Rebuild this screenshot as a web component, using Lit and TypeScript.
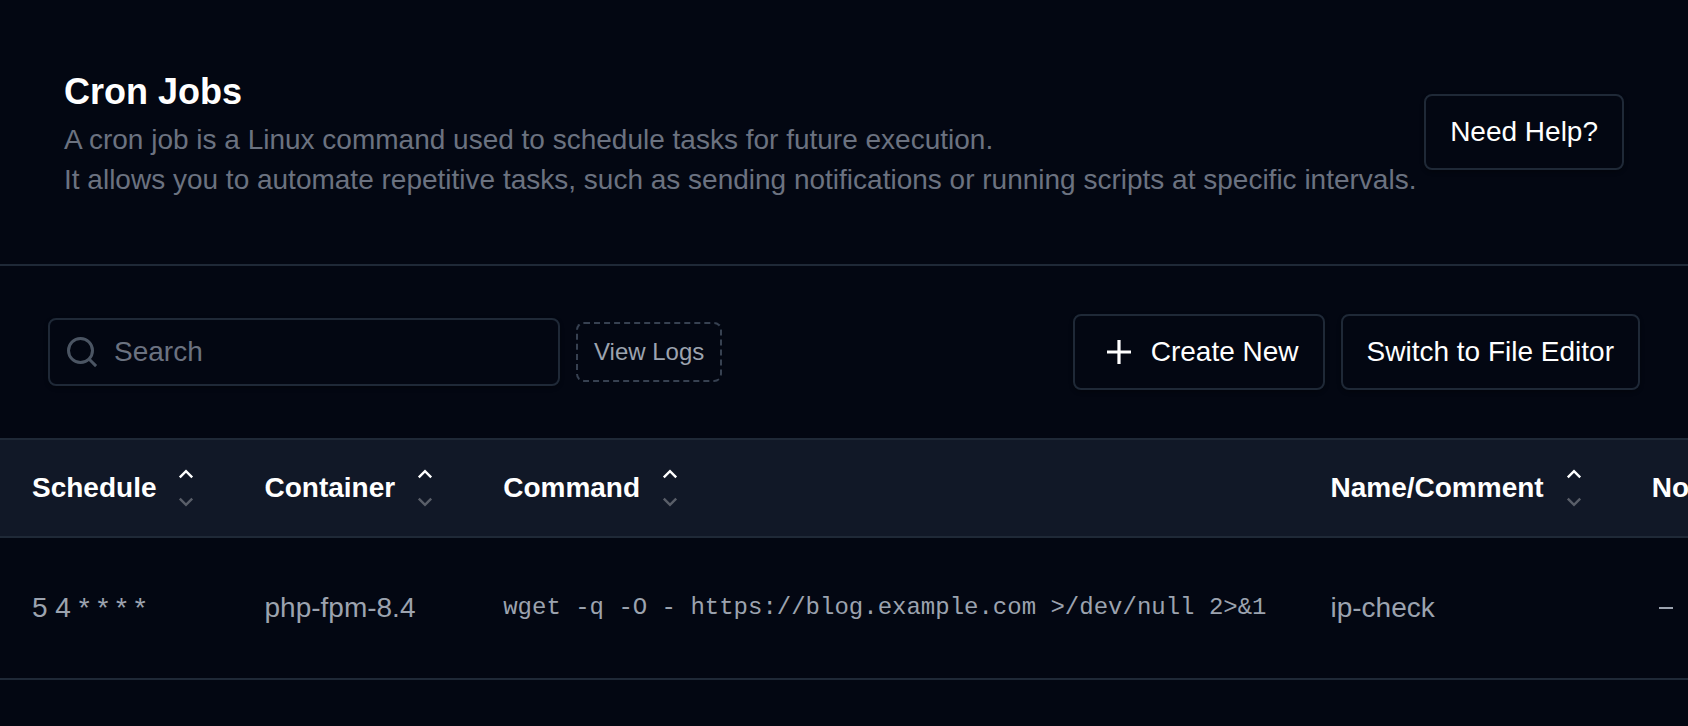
import { LitElement, html, css } from "lit";
import { customElement, property, state } from "lit/decorators.js";

interface CronJob {
  schedule: string;
  container: string;
  command: string;
  name: string;
}

type SortKey = keyof CronJob;

@customElement("sort-heading")
class SortHeading extends LitElement {
  @property() label = "";

  static styles = css`
    :host {
      display: block;
    }
    .sort {
      display: flex;
      align-items: center;
      gap: 16px;
      padding: 0;
      border: 0;
      background: none;
      color: inherit;
      font: inherit;
      white-space: nowrap;
      cursor: pointer;
    }
    .arrows {
      display: flex;
      flex-direction: column;
    }
    .arrow {
      display: block;
      width: 28px;
      height: 28px;
      fill: none;
      stroke: #ffffff;
      stroke-width: 2.4;
    }
    .dim {
      opacity: 0.3;
    }
  `;

  render() {
    return html`
      <button class="sort" type="button">
        <span>${this.label}</span>
        <span class="arrows" aria-hidden="true">
          <svg class="arrow" viewBox="0 0 28 28"><path d="M7.8 17.4 14 11.2l6.2 6.2"></path></svg>
          <svg class="arrow dim" viewBox="0 0 28 28"><path d="M7.8 10.6 14 16.8l6.2-6.2"></path></svg>
        </span>
      </button>
    `;
  }
}

@customElement("app-root")
class AppRoot extends LitElement {
  @state() private query = "";
  @state() private sortKey: SortKey = "schedule";

  private jobs: CronJob[] = [
    {
      schedule: "5 4 * * * *",
      container: "php-fpm-8.4",
      command: "wget -q -O - https://blog.example.com >/dev/null 2>&1",
      name: "ip-check",
    },
  ];

  private columns: { key: SortKey; label: string }[] = [
    { key: "schedule", label: "Schedule" },
    { key: "container", label: "Container" },
    { key: "command", label: "Command" },
    { key: "name", label: "Name/Comment" },
  ];

  static styles = css`
    :host {
      display: block;
      box-sizing: border-box;
      min-height: 100vh;
      background: #030712;
      color: #ffffff;
      font-family: "Liberation Sans", Arial, sans-serif;
      font-size: 28px;
      line-height: 40px;
    }
    .header {
      display: flex;
      align-items: center;
      justify-content: space-between;
      padding: 64px;
      border-bottom: 2px solid #1f2937;
    }
    .title {
      margin: 0;
      font-size: 36px;
      line-height: 56px;
      font-weight: 700;
    }
    .intro {
      margin: 0;
      color: #6b7280;
    }
    .button {
      display: flex;
      flex: none;
      align-items: center;
      gap: 12px;
      padding: 16px 24px;
      border: 2px solid #1f2937;
      border-radius: 8px;
      background: #030712;
      color: #ffffff;
      font: inherit;
      white-space: nowrap;
      box-shadow: 0 2px 4px rgba(0, 0, 0, 0.3);
      cursor: pointer;
    }
    .plus {
      width: 40px;
      height: 40px;
      fill: #ffffff;
    }
    .toolbar {
      display: flex;
      align-items: center;
      justify-content: space-between;
      gap: 16px;
      padding: 48px;
    }
    .group {
      display: flex;
      align-items: center;
      gap: 16px;
    }
    .search {
      display: flex;
      box-sizing: border-box;
      align-items: center;
      gap: 14px;
      width: 512px;
      padding: 12px 14px;
      border: 2px solid #1f2937;
      border-radius: 8px;
      box-shadow: 0 2px 4px rgba(0, 0, 0, 0.3);
    }
    .lens {
      flex: none;
      width: 36px;
      height: 36px;
      fill: none;
      stroke: #4b5563;
      stroke-width: 2;
    }
    .field {
      flex: 1;
      min-width: 0;
      height: 40px;
      padding: 0;
      border: 0;
      outline: 0;
      background: none;
      color: #ffffff;
      font: inherit;
    }
    .field::placeholder {
      color: #6b7280;
      opacity: 1;
    }
    .logs {
      padding: 12px 16px;
      border: 2px dashed #374151;
      border-radius: 8px;
      background: none;
      color: #9ca3af;
      font: inherit;
      font-size: 24px;
      line-height: 32px;
      white-space: nowrap;
      cursor: pointer;
    }
    .scroller {
      overflow-x: auto;
      scrollbar-width: none;
    }
    .table {
      min-width: 100%;
      border-spacing: 0;
      text-align: left;
      white-space: nowrap;
    }
    .head {
      padding: 20px 32px;
      border-top: 2px solid #1f2937;
      border-bottom: 2px solid #1f2937;
      background: #111827;
      font-weight: 700;
    }
    .cell {
      padding: 50px 32px;
      border-bottom: 2px solid #1f2937;
      color: #9ca3af;
      vertical-align: middle;
    }
    .mono {
      display: block;
      font-family: "Liberation Mono", monospace;
      font-size: 24px;
    }
    .dash {
      display: block;
      width: 28px;
      height: 28px;
      fill: #9ca3af;
    }
  `;

  private get rows(): CronJob[] {
    const q = this.query.toLowerCase();
    return this.jobs
      .filter((job) => Object.values(job).some((text) => text.toLowerCase().includes(q)))
      .sort((a, b) => a[this.sortKey].localeCompare(b[this.sortKey]));
  }

  render() {
    return html`
      <header class="header">
        <div>
          <h1 class="title">Cron Jobs</h1>
          <p class="intro">
            A cron job is a Linux command used to schedule tasks for future execution.<br />It
            allows you to automate repetitive tasks, such as sending notifications or running
            scripts at specific intervals.
          </p>
        </div>
        <button class="button" type="button">Need Help?</button>
      </header>

      <div class="toolbar">
        <div class="group">
          <label class="search">
            <svg class="lens" viewBox="0 0 24 24" aria-hidden="true">
              <circle cx="11" cy="11" r="8"></circle>
              <path d="M21.4 21.4 16.65 16.65"></path>
            </svg>
            <input
              class="field"
              type="text"
              placeholder="Search"
              aria-label="Search"
              .value=${this.query}
              @input=${(e: Event) => (this.query = (e.target as HTMLInputElement).value)}
            />
          </label>
          <button class="logs" type="button">View Logs</button>
        </div>
        <div class="group">
          <button class="button" type="button">
            <svg class="plus" viewBox="0 0 40 40" aria-hidden="true">
              <path d="M18.4 8h3.2v10.4H32v3.2H21.6V32h-3.2V21.6H8v-3.2h10.4Z"></path>
            </svg>
            Create New
          </button>
          <button class="button" type="button">Switch to File Editor</button>
        </div>
      </div>

      <div class="scroller">
        <table class="table">
          <thead>
            <tr>
              ${this.columns.map(
                (column) => html`
                  <th class="head" scope="col">
                    <sort-heading
                      label=${column.label}
                      @click=${() => (this.sortKey = column.key)}
                    ></sort-heading>
                  </th>
                `
              )}
              <th class="head" scope="col">No</th>
            </tr>
          </thead>
          <tbody>
            ${this.rows.map(
              (job) => html`
                <tr>
                  <td class="cell">${job.schedule}</td>
                  <td class="cell">${job.container}</td>
                  <td class="cell"><code class="mono">${job.command}</code></td>
                  <td class="cell">${job.name}</td>
                  <td class="cell">
                    <svg class="dash" viewBox="0 0 28 28" aria-hidden="true">
                      <path d="M7 13h14v2H7Z"></path>
                    </svg>
                  </td>
                </tr>
              `
            )}
          </tbody>
        </table>
      </div>
    `;
  }
}
